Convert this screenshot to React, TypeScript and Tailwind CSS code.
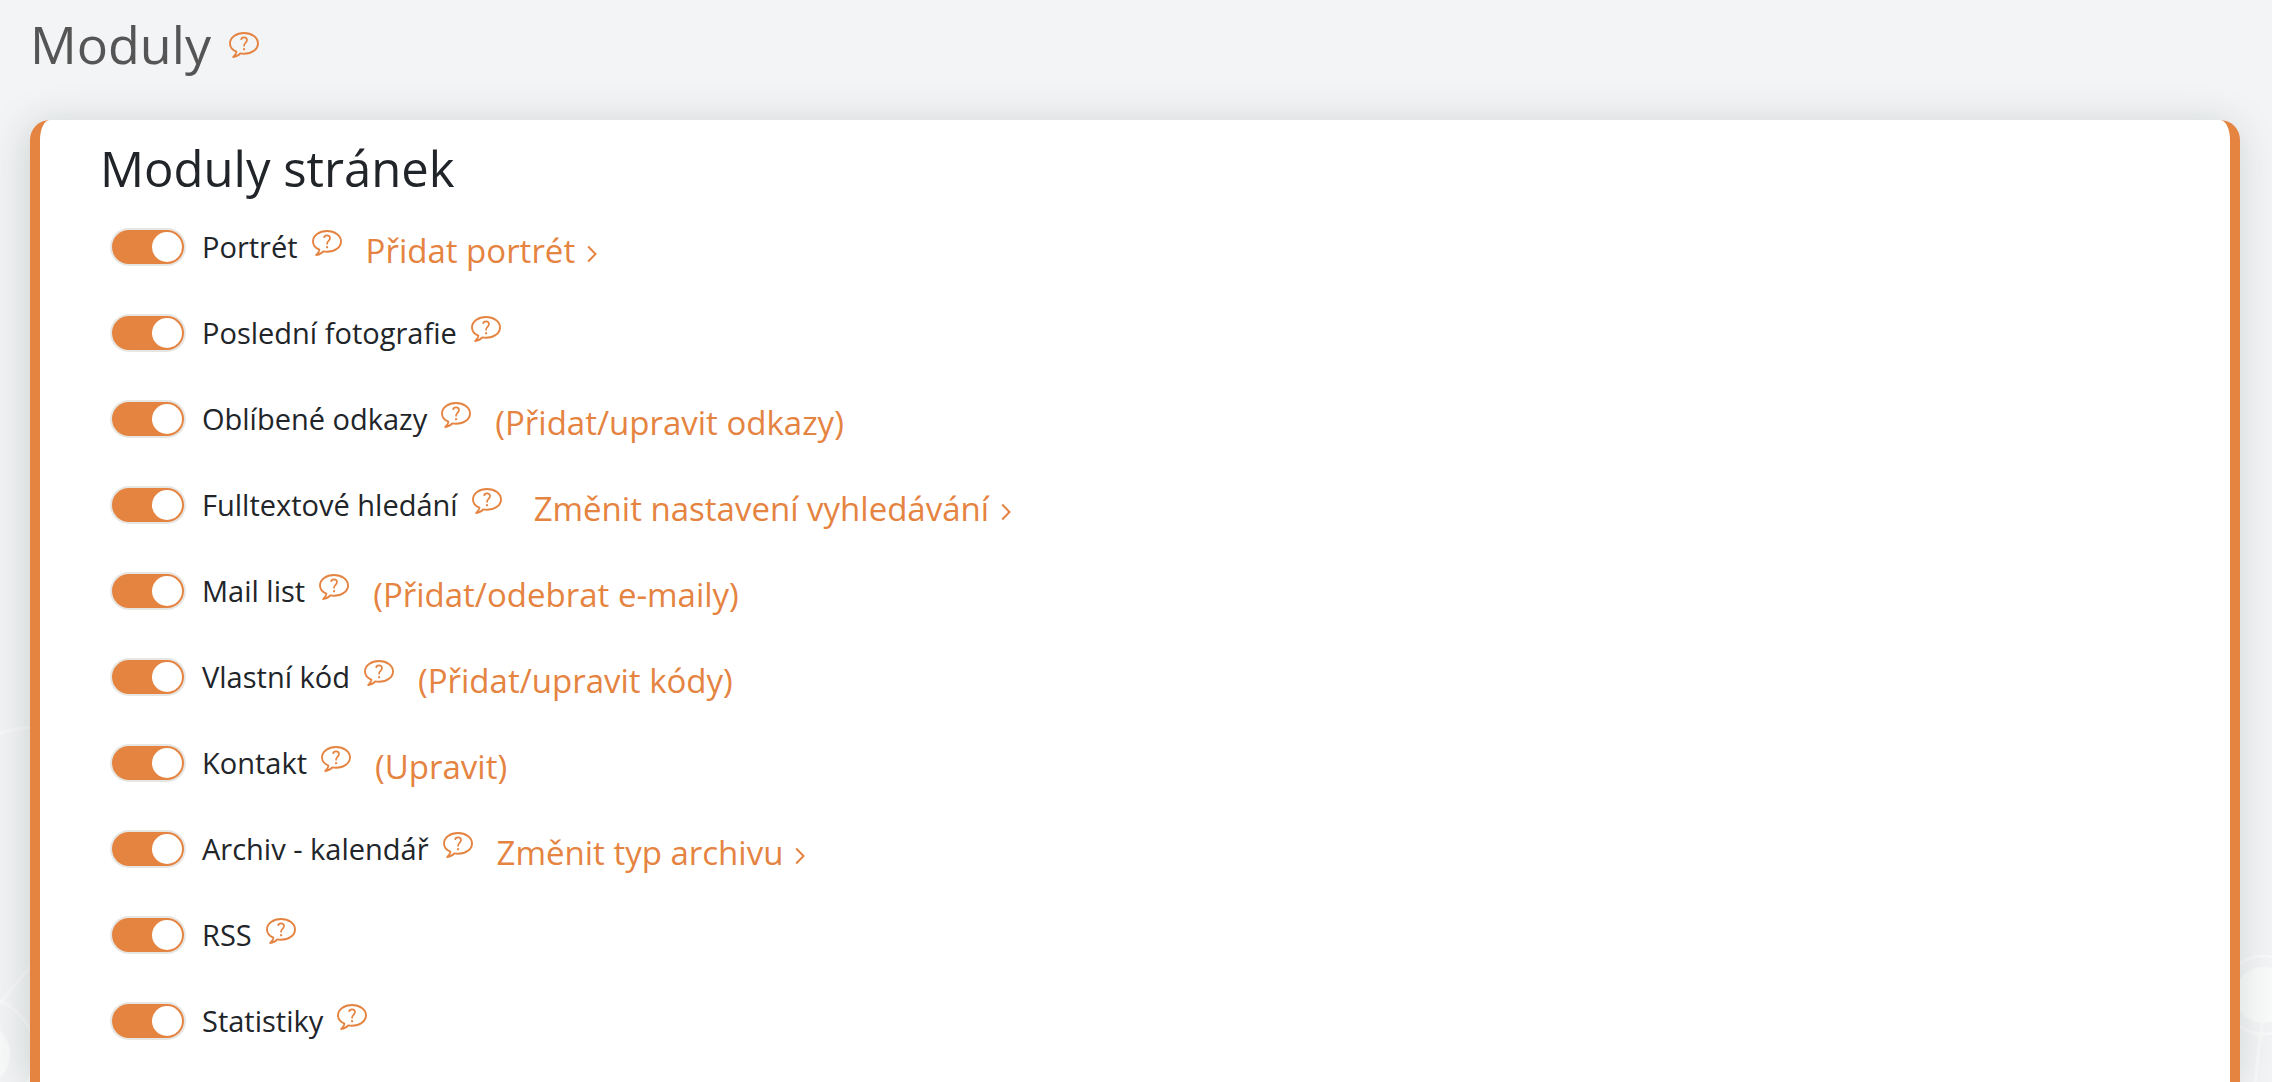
import React, { useState } from 'react';

type Module = {
  id: string;
  label: string;
  link?: string;
  arrow?: boolean;
  wide?: boolean;
};

const modules: Module[] = [
  { id: 'portrait', label: 'Portrét', link: 'Přidat portrét', arrow: true },
  { id: 'photos', label: 'Poslední fotografie' },
  { id: 'links', label: 'Oblíbené odkazy', link: '(Přidat/upravit odkazy)' },
  { id: 'search', label: 'Fulltextové hledání', link: 'Změnit nastavení vyhledávání', arrow: true, wide: true },
  { id: 'mail', label: 'Mail list', link: '(Přidat/odebrat e-maily)' },
  { id: 'code', label: 'Vlastní kód', link: '(Přidat/upravit kódy)' },
  { id: 'contact', label: 'Kontakt', link: '(Upravit)' },
  { id: 'archive', label: 'Archiv - kalendář', link: 'Změnit typ archivu', arrow: true },
  { id: 'rss', label: 'RSS' },
  { id: 'stats', label: 'Statistiky' },
];

const HelpButton: React.FC = () => (
  <button type="button" className="block shrink-0 cursor-pointer text-[#e58341]">
    <svg width="30" height="26" viewBox="0 0 30 26" fill="none" stroke="currentColor" className="block">
      <path
        d="M7.4 19.6C3.5 17.9 1 14.900 1 11.400 1 5.600 7.200 1 15 1s14 4.600 14 10.400S22.800 21.800 15 21.800c-1.300 0-2.500-.1-3.700-.4C9.400 23.500 7 24.900 4.200 25c1.900-1.400 3-3.200 3.200-5.400Z"
        strokeWidth="1.900"
        strokeLinejoin="round"
      />
      <path d="M12.100 7.800C12.300 6.200 13.400 5.400 15 5.400c1.800 0 3 1.100 3 2.700 0 2.600-2.900 2.900-2.900 5.400v1" strokeWidth="1.700" />
      <path d="M15.100 16.200v2" strokeWidth="2" />
    </svg>
  </button>
);

const Arrow: React.FC = () => (
  <svg width="10" height="18" viewBox="0 0 10 18" fill="none" stroke="currentColor" strokeWidth="2" className="mt-1.5">
    <path d="M1.200 1.500 8.500 9l-7.300 7.500" />
  </svg>
);

const Backdrop: React.FC = () => (
  <div className="pointer-events-none absolute inset-x-0 bottom-0 -z-10 flex justify-between">
    <svg width="120" height="362" viewBox="0 0 120 362" fill="none" stroke="#f8f9f9" strokeWidth="3">
      <path d="M-10 16Q10 9 40 6M-4 288 34 242" />
      <circle cx="-22" cy="334" r="57" />
      <circle cx="-22" cy="334" r="32" fill="#f9fbfa" stroke="none" />
    </svg>
    <svg width="92" height="362" viewBox="0 0 92 362" fill="none" stroke="#f8f9f9" strokeWidth="3">
      <circle cx="83" cy="275" r="39" />
      <circle cx="83" cy="275" r="28" fill="#f9fbfa" stroke="none" />
      <path d="M82 303 75 362" />
    </svg>
  </div>
);

const ModuleRow: React.FC<{ module: Module }> = ({ module }) => {
  const [on, setOn] = useState(true);

  return (
    <li className="flex h-[86px] items-center">
      <input
        id={module.id}
        type="checkbox"
        role="switch"
        checked={on}
        onChange={() => setOn(!on)}
        className="flex h-[34px] w-[72px] shrink-0 cursor-pointer appearance-none items-center rounded-full bg-gray-300 px-0.5 ring-2 ring-[#e6e7e3] before:size-[30px] before:rounded-full before:bg-white before:content-[''] checked:justify-end checked:bg-[#e58341]"
      />
      <label htmlFor={module.id} className="ml-[18px] cursor-pointer text-[29px] leading-10">
        {module.label}
      </label>
      <div className="ml-3.5 pb-2">
        <HelpButton />
      </div>
      {module.link && (
        <a
          href={`#${module.id}`}
          className={`flex items-center gap-3 pt-2 text-[33px] leading-12 text-[#e58341] ${module.wide ? 'ml-8' : 'ml-6'}`}
        >
          {module.link}
          {module.arrow && <Arrow />}
        </a>
      )}
    </li>
  );
};

const App: React.FC = () => {
  return (
    <div className="relative isolate flex min-h-screen flex-col overflow-hidden bg-[#f3f4f6] pr-8 pl-[30px] font-['Open_Sans','Noto_Sans',sans-serif] text-[#212529]">
      <Backdrop />
      <header className="flex h-[120px] items-start gap-[18px] pt-2">
        <h1 className="text-[52px] leading-[72px] text-[#555555]">Moduly</h1>
        <div className="pt-6">
          <HelpButton />
        </div>
      </header>
      <main className="flex-1 rounded-t-[20px] border-x-10 border-[#e58341] bg-white shadow-[-3px_4px_40px_rgba(20,40,20,0.17)]">
        <h2 className="px-15 pt-3.5 pb-0.5 text-[49px] leading-[68px]">Moduly stránek</h2>
        <ul className="px-18">
          {modules.map((m) => (
            <ModuleRow key={m.id} module={m} />
          ))}
        </ul>
      </main>
    </div>
  );
};

export default App;
